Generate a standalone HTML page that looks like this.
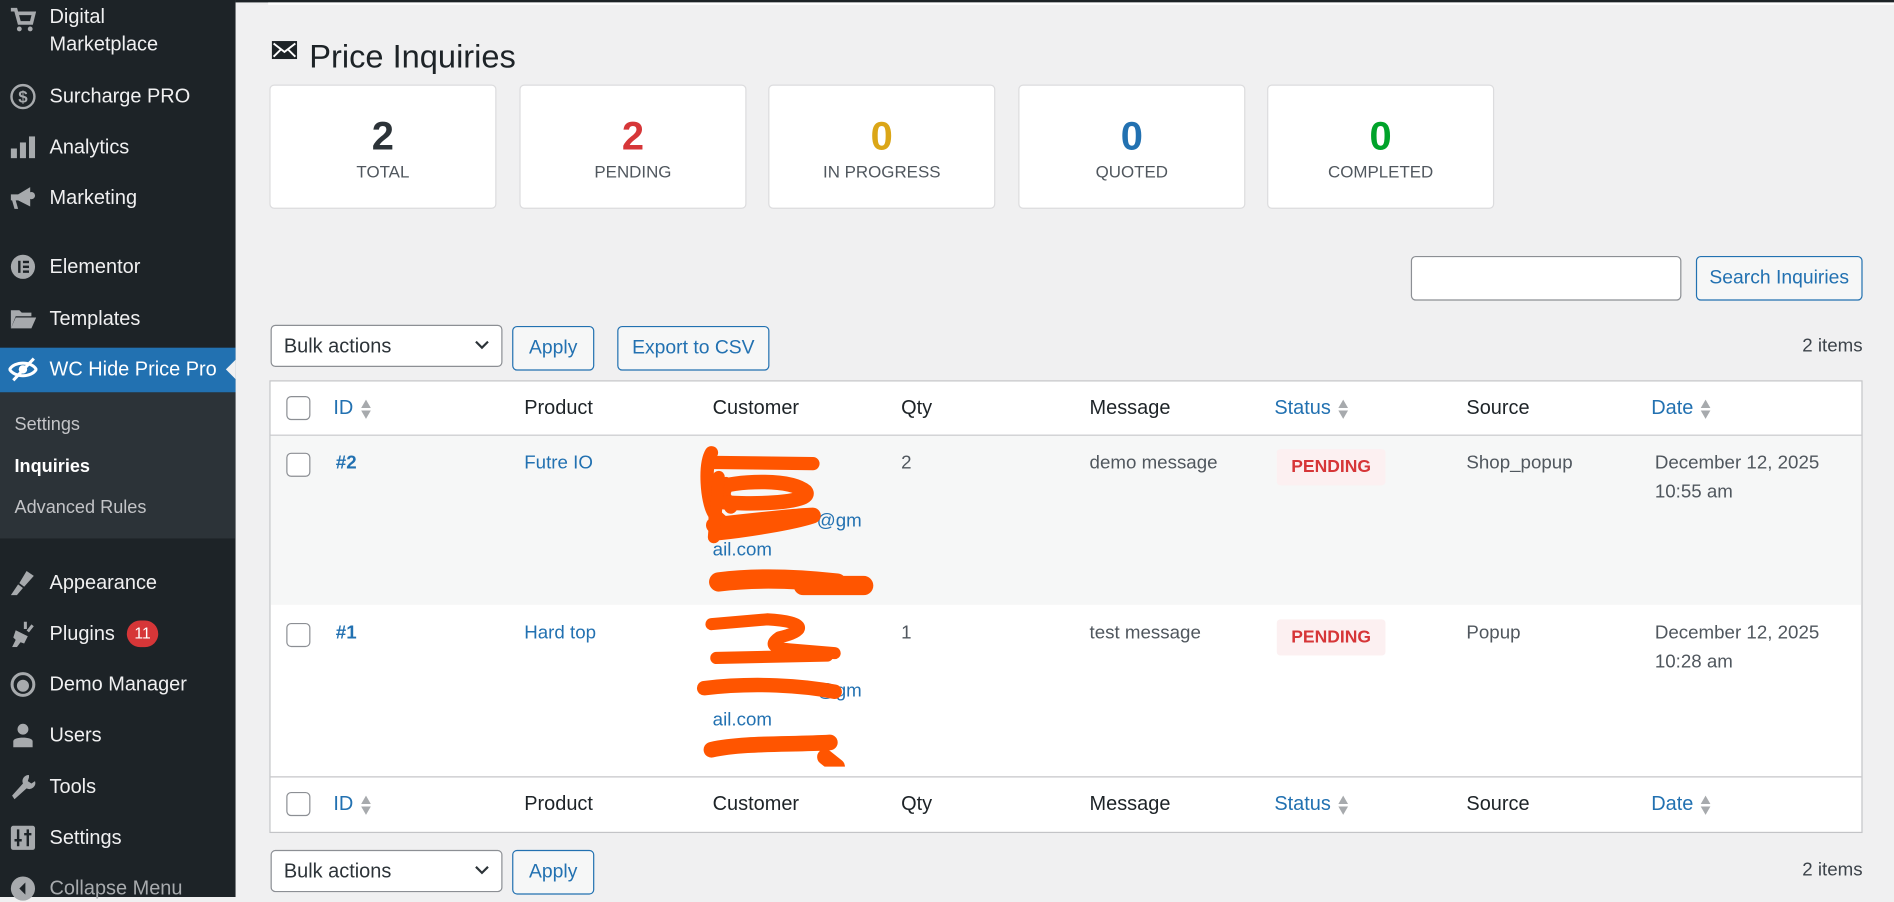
<!DOCTYPE html>
<html><head><meta charset="utf-8"><style>
html,body{margin:0;padding:0;width:1894px;height:897px;overflow:hidden;background:#f0f0f1}
#w{position:absolute;left:0;top:0;width:1568px;height:743px;transform:scale(1.20791,1.20727);transform-origin:0 0;font-family:"Liberation Sans",sans-serif;color:#3c434a}
.a{position:absolute}
#sb{left:0;top:0;width:195px;height:743px;background:#1d2327}
.mi{position:absolute;left:41px;color:#f0f0f1;font-size:16.5px;white-space:nowrap;line-height:20px}
.ic{position:absolute;left:8px;width:22px;height:22px}
.sm{position:absolute;left:12px;font-size:15px;color:#c3c4c7}
.card{position:absolute;top:70px;width:186px;height:101px;background:#fff;border:1px solid #dcdcde;border-radius:4px;text-align:center}
.card .n{position:absolute;left:0;right:0;top:22px;font-size:33px;font-weight:bold;line-height:40px}
.card .l{position:absolute;left:0;right:0;top:63px;font-size:14px;color:#50575e;letter-spacing:0}
.btn{position:absolute;height:35px;border:1px solid #2271b1;border-radius:4px;background:#f6f7f7;color:#2271b1;font-size:16px;line-height:35px;text-align:center}
.sel{position:absolute;height:35px;border:1px solid #8c8f94;border-radius:4px;background:#fff;color:#2c3338;font-size:16.5px;line-height:35px;padding-left:10px;box-sizing:border-box}
.sel svg{position:absolute;right:10px;top:12px}
.cb{position:absolute;width:18px;height:18px;border:1px solid #8c8f94;border-radius:4px;background:#fff}
.th{position:absolute;font-size:16.5px;color:#1d2327}
.td{position:absolute;font-size:15.5px;color:#50575e;line-height:24px}
.th.lk,.td.lk{color:#2271b1}
.so{display:inline-block;vertical-align:middle;margin-left:5px;width:10px;height:18px}
.badge{position:absolute;width:90px;height:30px;background:#fcf0f1;color:#d63638;font-size:14.5px;font-weight:bold;line-height:30px;text-align:center;border-radius:3px}
</style></head><body><div id="w">
<div class="a" style="left:195px;top:0;width:1373px;height:2px;background:#1d2327"></div>
<div class="a" style="left:222px;top:2px;width:1346px;height:2px;background:#fff"></div>

<div id="sb" class="a">
<svg class="ic" style="top:5px" viewBox="0 0 22 22"><path d="M1 3h4l3 11h10l2-8H7" fill="none" stroke="#a7aaad" stroke-width="3"/><circle cx="8" cy="19" r="2" fill="#a7aaad"/><circle cx="17" cy="19" r="2" fill="#a7aaad"/></svg>
<div class="mi" style="top:4px">Digital</div><div class="mi" style="top:27px">Marketplace</div>
<svg class="ic" style="top:69px" viewBox="0 0 22 22"><circle cx="11" cy="11" r="9.5" fill="none" stroke="#a7aaad" stroke-width="2"/><text x="11" y="16" font-size="14" text-anchor="middle" fill="#a7aaad" font-family="Liberation Sans" font-weight="bold">$</text></svg>
<div class="mi" style="top:70px">Surcharge PRO</div>
<svg class="ic" style="top:111px" viewBox="0 0 22 22"><rect x="1" y="12" width="5" height="8" fill="#a7aaad"/><rect x="8.5" y="7" width="5" height="13" fill="#a7aaad"/><rect x="16" y="2" width="5" height="18" fill="#a7aaad"/></svg>
<div class="mi" style="top:112px">Analytics</div>
<svg class="ic" style="top:153px" viewBox="0 0 22 22"><path d="M1 8h6l10-6v16L7 13H5l2 7H4l-2-7H1z" fill="#a7aaad"/><circle cx="18" cy="9" r="3" fill="#a7aaad"/></svg>
<div class="mi" style="top:154px">Marketing</div>
<svg class="ic" style="top:210px" viewBox="0 0 22 22"><circle cx="11" cy="11" r="10" fill="#a7aaad"/><rect x="7" y="6" width="2" height="10" fill="#1d2327"/><rect x="11" y="6" width="5" height="2" fill="#1d2327"/><rect x="11" y="10" width="5" height="2" fill="#1d2327"/><rect x="11" y="14" width="5" height="2" fill="#1d2327"/></svg>
<div class="mi" style="top:211px">Elementor</div>
<svg class="ic" style="top:253px" viewBox="0 0 22 22"><path d="M1 4h7l2 2h8v3H5L1 19z" fill="#a7aaad"/><path d="M5 10h17l-4 9H1z" fill="#a7aaad"/></svg>
<div class="mi" style="top:254px">Templates</div>
<div class="a" style="left:0;top:288px;width:195px;height:37px;background:#2271b1"></div>
<div class="a" style="left:187px;top:298px;width:0;height:0;border-top:8px solid transparent;border-bottom:8px solid transparent;border-right:8px solid #f0f0f1"></div>
<svg class="ic" style="top:295px;left:7px;width:24px" viewBox="0 0 24 22"><path d="M1 11C5 4 19 4 23 11C19 18 5 18 1 11z" fill="none" stroke="#fff" stroke-width="2.5"/><circle cx="12" cy="11" r="3.5" fill="#fff"/><path d="M4 20L21 2" stroke="#fff" stroke-width="2.5"/></svg>
<div class="mi" style="top:296px;color:#fff">WC Hide Price Pro</div>
<div class="a" style="left:0;top:325px;width:195px;height:121px;background:#2c3338"></div>
<div class="sm" style="top:343px">Settings</div>
<div class="sm" style="top:378px;color:#fff;font-weight:bold">Inquiries</div>
<div class="sm" style="top:412px">Advanced Rules</div>
<svg class="ic" style="top:472px" viewBox="0 0 22 22"><path d="M14 1l6 4-8 9-4-3z" fill="#a7aaad"/><path d="M7 12l4 3-5 6H1z" fill="#a7aaad"/></svg>
<div class="mi" style="top:473px">Appearance</div>
<svg class="ic" style="top:514px" viewBox="0 0 22 22"><path d="M13 1v6M19 4l-4 5" stroke="#a7aaad" stroke-width="2.5"/><path d="M5 8l10 5-3 6-3-1-3 4H2l3-6-2-2z" fill="#a7aaad"/></svg>
<div class="mi" style="top:515px">Plugins</div>
<div class="a" style="left:105px;top:514px;width:26px;height:22px;border-radius:11px;background:#d63638;color:#fff;font-size:13px;line-height:22px;text-align:center">11</div>
<svg class="ic" style="top:556px" viewBox="0 0 22 22"><circle cx="11" cy="11" r="9" fill="none" stroke="#a7aaad" stroke-width="2.5"/><circle cx="11" cy="12" r="5" fill="#a7aaad"/></svg>
<div class="mi" style="top:557px">Demo Manager</div>
<svg class="ic" style="top:598px" viewBox="0 0 22 22"><circle cx="11" cy="6" r="4.5" fill="#a7aaad"/><path d="M3 21v-5c0-4 16-4 16 0v5z" fill="#a7aaad"/></svg>
<div class="mi" style="top:599px">Users</div>
<svg class="ic" style="top:641px" viewBox="0 0 22 22"><path d="M16 1a5 5 0 0 0-5 7L2 18l2 3 10-9a5 5 0 0 0 7-6l-3 2-3-2 1-3z" fill="#a7aaad"/></svg>
<div class="mi" style="top:642px">Tools</div>
<svg class="ic" style="top:683px" viewBox="0 0 22 22"><rect x="1" y="1" width="20" height="20" rx="2" fill="#a7aaad"/><path d="M7 4v14M15 4v14M4 13h6M12 8h6" stroke="#1d2327" stroke-width="2"/></svg>
<div class="mi" style="top:684px">Settings</div>
<svg class="ic" style="top:725px" viewBox="0 0 22 22"><circle cx="11" cy="11" r="10" fill="#a7aaad"/><path d="M13 6l-5 5 5 5z" fill="#1d2327"/></svg>
<div class="mi" style="top:726px;color:#a7aaad">Collapse Menu</div>
</div>

<svg class="a" style="left:225px;top:34px" width="21" height="15" viewBox="0 0 21 15"><rect x="0" y="0" width="21" height="15" fill="#1d2327"/><path d="M1.5 2l9 7 9-7M1.5 13l6-6M19.5 13l-6-6" stroke="#fff" stroke-width="1.6" fill="none"/></svg>
<div class="a" style="left:256px;top:32px;font-size:27px;color:#1d2327;white-space:nowrap">Price Inquiries</div>

<div class="card" style="left:223px"><div class="n" style="color:#2c3338">2</div><div class="l">TOTAL</div></div>
<div class="card" style="left:430px"><div class="n" style="color:#d63638">2</div><div class="l">PENDING</div></div>
<div class="card" style="left:636px"><div class="n" style="color:#dba617">0</div><div class="l">IN PROGRESS</div></div>
<div class="card" style="left:843px"><div class="n" style="color:#2271b1">0</div><div class="l">QUOTED</div></div>
<div class="card" style="left:1049px"><div class="n" style="color:#00a32a">0</div><div class="l">COMPLETED</div></div>

<div class="a" style="left:1168px;top:212px;width:222px;height:35px;border:1px solid #8c8f94;border-radius:4px;background:#fff"></div>
<div class="btn" style="left:1404px;top:212px;width:136px">Search Inquiries</div>

<div class="sel" style="left:224px;top:269px;width:192px">Bulk actions<svg width="12" height="8" viewBox="0 0 12 8"><path d="M1 1l5 5 5-5" fill="none" stroke="#2c3338" stroke-width="1.8"/></svg></div>
<div class="btn" style="left:424px;top:270px;width:66px">Apply</div>
<div class="btn" style="left:511px;top:270px;width:124px">Export to CSV</div>
<div class="a" style="right:26px;top:278px;font-size:15.5px;color:#3c434a">2 items</div>

<div class="a" style="left:223px;top:315px;width:1317px;height:373px;background:#fff;border:1px solid #c3c4c7"></div>
<div class="a" style="left:224px;top:360px;width:1317px;height:1px;background:#c3c4c7"></div>
<div class="a" style="left:224px;top:361px;width:1317px;height:140px;background:#f6f7f7"></div>
<div class="a" style="left:224px;top:643px;width:1317px;height:1px;background:#c3c4c7"></div>

<div class="cb" style="left:237px;top:328px"></div>
<div class="th lk" style="left:276px;top:329px">ID<svg class="so" viewBox="0 0 10 18"><path d="M5 1l4 7H1z M5 17l4-7H1z" fill="#a7aaad"/></svg></div>
<div class="th" style="left:434px;top:329px">Product</div>
<div class="th" style="left:590px;top:329px">Customer</div>
<div class="th" style="left:746px;top:329px">Qty</div>
<div class="th" style="left:902px;top:329px">Message</div>
<div class="th lk" style="left:1055px;top:329px">Status<svg class="so" viewBox="0 0 10 18"><path d="M5 1l4 7H1z M5 17l4-7H1z" fill="#a7aaad"/></svg></div>
<div class="th" style="left:1214px;top:329px">Source</div>
<div class="th lk" style="left:1367px;top:329px">Date<svg class="so" viewBox="0 0 10 18"><path d="M5 1l4 7H1z M5 17l4-7H1z" fill="#a7aaad"/></svg></div>

<div class="cb" style="left:237px;top:375px"></div>
<div class="td lk" style="left:278px;top:372px;font-weight:bold">#2</div>
<div class="td lk" style="left:434px;top:372px">Futre IO</div>
<div class="td lk" style="left:590px;top:372px">&nbsp;<br>&nbsp;<br>&nbsp;&nbsp;&nbsp;&nbsp;&nbsp;&nbsp;&nbsp;&nbsp;&nbsp;&nbsp;&nbsp;&nbsp;&nbsp;&nbsp;&nbsp;&nbsp;&nbsp;&nbsp;&nbsp;&nbsp;@gm<br>ail.com</div>
<div class="td" style="left:746px;top:372px">2</div>
<div class="td" style="left:902px;top:372px">demo message</div>
<div class="badge" style="left:1057px;top:372px">PENDING</div>
<div class="td" style="left:1214px;top:372px">Shop_popup</div>
<div class="td" style="left:1370px;top:372px">December 12, 2025<br>10:55 am</div>

<div class="cb" style="left:237px;top:516px"></div>
<div class="td lk" style="left:278px;top:513px;font-weight:bold">#1</div>
<div class="td lk" style="left:434px;top:513px">Hard top</div>
<div class="td lk" style="left:590px;top:513px">&nbsp;<br>&nbsp;<br>&nbsp;&nbsp;&nbsp;&nbsp;&nbsp;&nbsp;&nbsp;&nbsp;&nbsp;&nbsp;&nbsp;&nbsp;&nbsp;&nbsp;&nbsp;&nbsp;&nbsp;&nbsp;&nbsp;&nbsp;@gm<br>ail.com</div>
<div class="td" style="left:746px;top:513px">1</div>
<div class="td" style="left:902px;top:513px">test message</div>
<div class="badge" style="left:1057px;top:513px">PENDING</div>
<div class="td" style="left:1214px;top:513px">Popup</div>
<div class="td" style="left:1370px;top:513px">December 12, 2025<br>10:28 am</div>

<svg class="a" style="left:575px;top:365px" width="160" height="270" viewBox="0 0 160 270">
<g fill="none" stroke="#ff5500" stroke-linecap="round" stroke-linejoin="round">
<path d="M12 18L98 19M14 10C8 20 10 50 16 60C22 40 30 25 24 45L30 55" stroke-width="11"/>
<path d="M14 40C40 32 80 32 92 42C100 52 40 54 16 50" stroke-width="12"/>
<path d="M16 70C50 66 90 62 98 62C80 68 40 74 20 76C30 72 24 70 18 64" stroke-width="13"/>
<path d="M20 30L16 80" stroke-width="10"/>
<path d="M20 117C60 112 100 116 118 118M90 120L140 120" stroke-width="16"/>
<path d="M14 152L60 148C95 150 92 158 70 163C60 170 68 172 80 173L116 176M18 180L110 178" stroke-width="10"/>
<path d="M8 205C50 200 90 203 116 208" stroke-width="12"/>
<path d="M14 256C40 250 80 252 112 250M108 262L118 270" stroke-width="13"/>
</g></svg>

<div class="cb" style="left:237px;top:656px"></div>
<div class="th lk" style="left:276px;top:657px">ID<svg class="so" viewBox="0 0 10 18"><path d="M5 1l4 7H1z M5 17l4-7H1z" fill="#a7aaad"/></svg></div>
<div class="th" style="left:434px;top:657px">Product</div>
<div class="th" style="left:590px;top:657px">Customer</div>
<div class="th" style="left:746px;top:657px">Qty</div>
<div class="th" style="left:902px;top:657px">Message</div>
<div class="th lk" style="left:1055px;top:657px">Status<svg class="so" viewBox="0 0 10 18"><path d="M5 1l4 7H1z M5 17l4-7H1z" fill="#a7aaad"/></svg></div>
<div class="th" style="left:1214px;top:657px">Source</div>
<div class="th lk" style="left:1367px;top:657px">Date<svg class="so" viewBox="0 0 10 18"><path d="M5 1l4 7H1z M5 17l4-7H1z" fill="#a7aaad"/></svg></div>

<div class="sel" style="left:224px;top:704px;width:192px">Bulk actions<svg width="12" height="8" viewBox="0 0 12 8"><path d="M1 1l5 5 5-5" fill="none" stroke="#2c3338" stroke-width="1.8"/></svg></div>
<div class="btn" style="left:424px;top:704px;width:66px">Apply</div>
<div class="a" style="right:26px;top:712px;font-size:15.5px;color:#3c434a">2 items</div>
</div></body></html>
